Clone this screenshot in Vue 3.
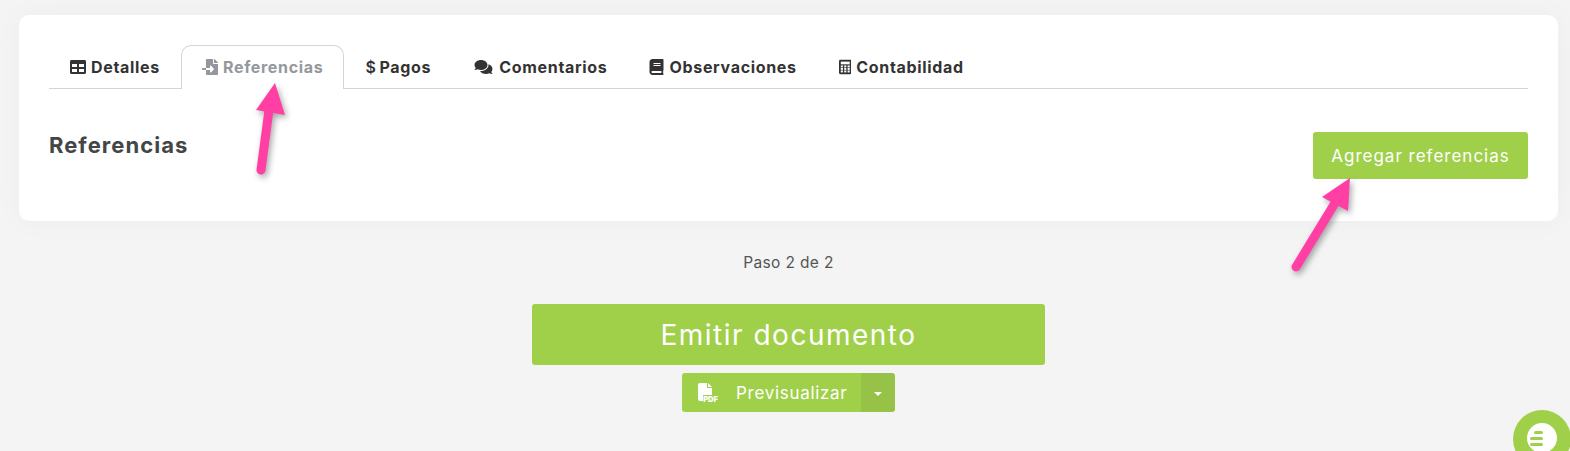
<template>
  <div class="page">
    <div class="card">
      <ul class="tabs">
        <li v-for="tab in tabs" :key="tab.label" class="tab" :class="{ active: tab.active }">
          <svg v-if="tab.path" class="tab-icon" :viewBox="tab.box" :style="{ width: tab.w + 'px' }">
            <path :d="tab.path" fill="currentColor" />
          </svg>
          <span v-else-if="tab.glyph" class="tab-glyph">{{ tab.glyph }}</span>
          <svg v-else class="tab-icon" viewBox="0 0 448 512" style="width: 12.5px">
            <path d="M48 0h352c26 0 48 22 48 48v416c0 26-22 48-48 48H48c-26 0-48-22-48-48V48C0 22 22 0 48 0z" fill="currentColor" />
            <rect x="64" y="64" width="320" height="96" fill="#fff" />
            <rect v-for="c in calcKeys" :key="c.x + '-' + c.y" :x="c.x" :y="c.y" width="76" height="70" fill="#fff" />
          </svg>
          <span>{{ tab.label }}</span>
        </li>
      </ul>
      <div class="section-head">
        <h2>Referencias</h2>
        <button class="btn-add">Agregar referencias</button>
      </div>
    </div>

    <div class="actions">
      <p class="step">Paso 2 de 2</p>
      <button class="btn-emit">Emitir documento</button>
      <div class="split">
        <button class="btn-preview">
          <svg class="pdf-icon" viewBox="0 0 20 19">
            <path d="M2 0h7v5h5v7H5v6H2a2 2 0 0 1-2-2V2a2 2 0 0 1 2-2zM10 0l4 4h-4z" fill="#fff" />
            <text x="5.200" y="18.500" class="pdf-text">PDF</text>
          </svg>
          <span>Previsualizar</span>
        </button>
        <button class="btn-caret"><i></i></button>
      </div>
    </div>

    <!-- flechas de la captura -->
    <svg class="arrows" width="1570" height="451" viewBox="0 0 1570 451">
      <g class="arrow">
        <path d="M261 170L269 110" stroke="#ff3fa4" stroke-width="9" stroke-linecap="round" fill="none" />
        <path d="M275 83L256 110L285 115z" fill="#ff3fa4" />
        <path d="M1296 267L1335 203" stroke="#ff3fa4" stroke-width="9" stroke-linecap="round" fill="none" />
        <path d="M1350 178L1322 197L1348 211z" fill="#ff3fa4" />
      </g>
    </svg>

    <div class="chat">
      <div class="chat-inner">
        <i class="short"></i><i></i><i></i>
      </div>
    </div>
  </div>
</template>

<script setup>
const tabs = [
  {
    label: 'Detalles',
    box: '0 0 512 512',
    w: 16,
    path: 'M464 32H48C21.49 32 0 53.49 0 80v352c0 26.51 21.49 48 48 48h416c26.51 0 48-21.49 48-48V80c0-26.51-21.49-48-48-48zM224 416H64v-96h160v96zm0-160H64v-96h160v96zm224 160H288v-96h160v96zm0-160H288v-96h160v96z'
  },
  {
    label: 'Referencias',
    active: true,
    box: '0 0 512 512',
    w: 16,
    path: 'M16 288c-8.800 0-16 7.200-16 16v32c0 8.800 7.200 16 16 16h112v-64zm489-183L407.100 7c-4.500-4.500-10.600-7-17-7H384v128h128v-6.100c0-6.300-2.500-12.400-7-16.900zm-153 31V0H152c-13.300 0-24 10.700-24 24v264h128v-65.200c0-14.300 17.300-21.400 27.400-11.300L379 308c6.600 6.700 6.600 17.400 0 24l-95.700 96.400c-10.100 10.100-27.400 3-27.400-11.300V352H128v136c0 13.300 10.700 24 24 24h336c13.300 0 24-10.700 24-24V160H376c-13.200 0-24-10.800-24-24z'
  },
  { label: 'Pagos', glyph: '$' },
  {
    label: 'Comentarios',
    box: '0 0 576 512',
    w: 21,
    path: 'M416 192c0-88.400-93.100-160-208-160S0 103.600 0 192c0 34.300 14.100 65.900 38 92-13.400 30.200-35.500 54.200-35.800 54.500-2.200 2.300-2.800 5.700-1.500 8.700S4.800 352 8 352c36.600 0 66.900-12.300 88.700-25 32.200 15.700 70.300 25 111.300 25 114.900 0 208-71.600 208-160zm122 220c23.900-26 38-57.700 38-92 0-66.900-53.500-124.200-129.300-148.100.9 6.600 1.300 13.300 1.300 20.100 0 105.900-107.700 192-240 192-10.800 0-21.300-.8-31.700-1.900C207.800 439.600 281.800 480 368 480c41 0 79.100-9.200 111.300-25 21.800 12.700 52.100 25 88.700 25 3.200 0 6.100-1.900 7.300-4.800 1.300-2.900.7-6.300-1.500-8.700-.3-.3-22.400-24.200-35.800-54.500z'
  },
  {
    label: 'Observaciones',
    box: '0 0 448 512',
    w: 15,
    path: 'M448 360V24c0-13.300-10.700-24-24-24H96C43 0 0 43 0 96v320c0 53 43 96 96 96h328c13.300 0 24-10.700 24-24v-16c0-7.500-3.500-14.300-8.900-18.700-4.200-15.400-4.200-59.300 0-74.700 5.400-4.300 8.900-11.100 8.900-18.600zM128 134c0-3.300 2.700-6 6-6h212c3.300 0 6 2.700 6 6v20c0 3.300-2.700 6-6 6H134c-3.300 0-6-2.700-6-6v-20zm0 64c0-3.300 2.700-6 6-6h212c3.300 0 6 2.700 6 6v20c0 3.300-2.700 6-6 6H134c-3.300 0-6-2.700-6-6v-20zm253.400 250H96c-17.700 0-32-14.300-32-32 0-17.600 14.400-32 32-32h285.400c-1.900 17.100-1.900 46.900 0 64z'
  },
  { label: 'Contabilidad' }
]

const calcKeys = []
for (const y of [200, 290, 380]) {
  for (const x of [64, 186, 308]) calcKeys.push({ x, y })
}
</script>

<style>
body {
  overflow: hidden;
}
</style>

<style scoped>
.page {
  position: relative;
  width: 1570px;
  height: 451px;
  overflow: hidden;
  padding-top: 15px;
  box-sizing: border-box;
  background: #f4f4f4;
  font-family: Inter, "Open Sans", sans-serif;
  color: #333;
}

.card {
  width: 1539px;
  height: 206px;
  margin-left: 19px;
  padding: 30px 30px 0;
  box-sizing: border-box;
  background: #fff;
  border-radius: 10px;
  box-shadow: 0 0 30px rgba(0, 0, 0, 0.035);
}

.tabs {
  display: flex;
  height: 44px;
  margin: 0;
  padding: 0;
  box-sizing: border-box;
  list-style: none;
  border-bottom: 1px solid #d3d5d6;
}

.tab {
  display: flex;
  align-items: center;
  gap: 5px;
  height: 43px;
  padding: 0 21px;
  box-sizing: border-box;
  font-size: 16px;
  font-weight: 700;
  letter-spacing: 0.68px;
  color: #333;
}

.tab.active {
  height: 44px;
  color: #94989d;
  background: #fff;
  border: 1px solid #d3d5d6;
  border-bottom: 0;
  border-radius: 10px 10px 0 0;
  padding: 0 20px 1px;
}

.tab-icon {
  height: 16px;
  flex: none;
}

.tab-glyph {
  margin-right: -2px;
  font-size: 16px;
  font-weight: 600;
}

.section-head {
  display: flex;
  justify-content: space-between;
  align-items: flex-start;
  margin-top: 43px;
}

h2 {
  margin: 0;
  font-size: 22px;
  line-height: 26px;
  font-weight: 700;
  letter-spacing: 1.04px;
  color: #434646;
}

button {
  border: 0;
  color: #fff;
  font-family: inherit;
  background: #a0d04a;
}

.btn-add {
  width: 215px;
  height: 47px;
  padding: 0;
  font-size: 17px;
  font-weight: 400;
  letter-spacing: 1px;
  border-radius: 3px;
}

.actions {
  display: flex;
  flex-direction: column;
  align-items: center;
  width: 1539px;
  margin-left: 19px;
}

.step {
  margin: 32px 0 0;
  font-size: 15.500px;
  line-height: 20px;
  letter-spacing: 0.35px;
  color: #555;
}

.btn-emit {
  width: 513px;
  height: 61px;
  margin-top: 31px;
  padding: 0;
  font-size: 28px;
  font-weight: 400;
  letter-spacing: 1.5px;
  border-radius: 3px;
}

.split {
  display: flex;
  height: 39px;
  margin-top: 8px;
}

.btn-preview {
  display: flex;
  align-items: center;
  gap: 18px;
  width: 179px;
  padding: 0 0 0 16px;
  font-size: 17px;
  letter-spacing: 0.7px;
  border-radius: 3px 0 0 3px;
}

.pdf-icon {
  width: 20px;
  height: 19px;
  flex: none;
}

.pdf-text {
  font-size: 7.500px;
  font-weight: 900;
  letter-spacing: 0;
  fill: #fff;
}

.btn-caret {
  width: 34px;
  padding: 0;
  background: #96c347;
  border-radius: 0 3px 3px 0;
}

.btn-caret i {
  display: block;
  width: 0;
  margin: 2px auto 0;
  border-top: 4px solid #fff;
  border-left: 4px solid transparent;
  border-right: 4px solid transparent;
}

.arrows {
  position: absolute;
  top: 0;
  left: 0;
  pointer-events: none;
}

.arrow {
  filter: drop-shadow(2px 3px 3px rgba(0, 0, 0, 0.35));
}

.chat {
  position: absolute;
  left: 1513px;
  top: 410px;
  width: 58px;
  height: 58px;
  padding: 13px 0 0 14px;
  box-sizing: border-box;
  border-radius: 50%;
  background: #a0d04a;
}

.chat-inner {
  width: 30px;
  height: 30px;
  padding-right: 14px;
  box-sizing: border-box;
  border-radius: 50%;
  background: #fff;
  display: flex;
  flex-direction: column;
  align-items: flex-end;
  justify-content: center;
  gap: 3px;
}

.chat-inner i {
  display: block;
  width: 13px;
  height: 3px;
  border-radius: 2px;
  background: #a0d04a;
}

.chat-inner i.short {
  width: 9px;
}
</style>
